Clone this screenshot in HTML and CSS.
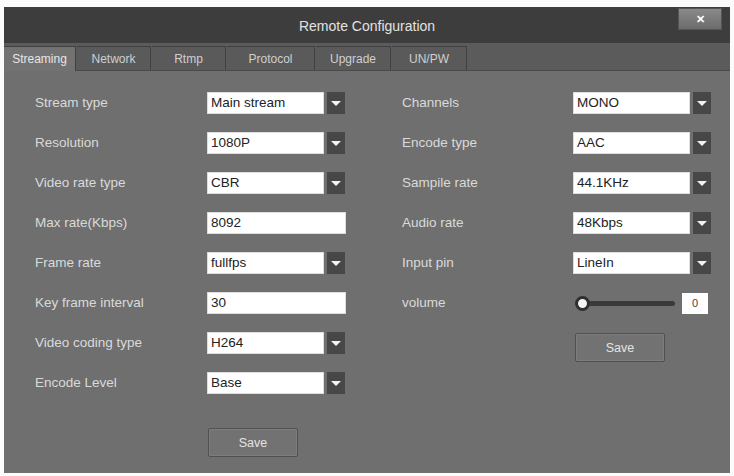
FILE: index.html
```html
<!DOCTYPE html>
<html lang="en">
<head>
  <meta charset="UTF-8" />
  <title>Remote Configuration</title>
  <link rel="stylesheet" href="styles.css">
</head>
<body>
  <div class="dialog">
    <div class="titlebar">
      <span class="title">Remote Configuration</span>
      <button class="close">&#x2715;</button>
    </div>
    <div class="tabs">
      <div class="tab active" style="width:72px">Streaming</div>
      <div class="tab" style="width:74px">Network</div>
      <div class="tab" style="width:74px">Rtmp</div>
      <div class="tab" style="width:88px">Protocol</div>
      <div class="tab" style="width:75px">Upgrade</div>
      <div class="tab" style="width:75px">UN/PW</div>
    </div>

    <div class="content">
      <div class="col col-left">
        <div class="row"><label>Stream type</label><div class="select"><span class="val">Main stream</span><span class="arrow"></span></div></div>
        <div class="row"><label>Resolution</label><div class="select"><span class="val">1080P</span><span class="arrow"></span></div></div>
        <div class="row"><label>Video rate type</label><div class="select"><span class="val">CBR</span><span class="arrow"></span></div></div>
        <div class="row"><label>Max rate(Kbps)</label><div class="text">8092</div></div>
        <div class="row"><label>Frame rate</label><div class="select"><span class="val">fullfps</span><span class="arrow"></span></div></div>
        <div class="row"><label>Key frame interval</label><div class="text">30</div></div>
        <div class="row"><label>Video coding type</label><div class="select"><span class="val">H264</span><span class="arrow"></span></div></div>
        <div class="row"><label>Encode Level</label><div class="select"><span class="val">Base</span><span class="arrow"></span></div></div>
        <button class="save save-left">Save</button>
      </div>

      <div class="col col-right">
        <div class="row"><label>Channels</label><div class="select"><span class="val">MONO</span><span class="arrow"></span></div></div>
        <div class="row"><label>Encode type</label><div class="select"><span class="val">AAC</span><span class="arrow"></span></div></div>
        <div class="row"><label>Sampile rate</label><div class="select"><span class="val">44.1KHz</span><span class="arrow"></span></div></div>
        <div class="row"><label>Audio rate</label><div class="select"><span class="val">48Kbps</span><span class="arrow"></span></div></div>
        <div class="row"><label>Input pin</label><div class="select"><span class="val">LineIn</span><span class="arrow"></span></div></div>
        <div class="row"><label>volume</label>
          <div class="slider">
            <div class="track"><span class="knob"></span></div>
            <div class="num">0</div>
          </div>
        </div>
        <button class="save save-right">Save</button>
      </div>
    </div>
  </div>
</body>
</html>
```

FILE: styles.css
```css
body {
  margin: 0;
  background: #fbfbfb;
  font-family: "Liberation Sans", Arial, sans-serif;
}
.dialog {
  margin: 7px 0 0 4px;
  width: 726px;
  height: 466px;
  display: flex;
  flex-direction: column;
  background: #6f6f6f;
}
.titlebar {
  height: 36px;
  background: #3d3d3d;
  display: flex;
  align-items: center;
  justify-content: center;
  position: relative;
}
.title {
  color: #e2e2e2;
  font-size: 14px;
  margin-top: 2px;
}
.close {
  position: absolute;
  top: 1px;
  right: 8px;
  width: 44px;
  height: 22px;
  background: linear-gradient(#8a8a8a, #6c6c6c);
  border: 1px solid #555;
  color: #fff;
  font-size: 11px;
  font-weight: bold;
  padding: 0;
}
.tabs {
  height: 27px;
  background: #5b5b5b;
  display: flex;
  align-items: flex-end;
  border-bottom: 1px solid #4a4a4a;
}
.tab {
  height: 24px;
  box-sizing: border-box;
  border: 1px solid #404040;
  border-bottom: none;
  border-left: none;
  background: #5a5a5a;
  color: #cfcfcf;
  font-size: 12px;
  display: flex;
  align-items: center;
  justify-content: center;
  margin-right: 1px;
}
.tab.active {
  background: #727272;
  color: #e6e6e6;
  height: 25px;
  margin-bottom: -1px;
}
.content {
  flex: 1;
  display: flex;
}
.col {
  display: flex;
  flex-direction: column;
  gap: 18px;
}
.col-left {
  padding: 21px 0 0 31px;
  width: 367px;
}
.col-right {
  padding: 21px 0 0 0;
}
.row {
  display: flex;
  align-items: center;
  height: 22px;
}
label {
  color: #dadada;
  font-size: 13.5px;
  width: 172px;
  margin-top: -2px;
}
.col-right label {
  width: 171px;
}
.select {
  display: flex;
  height: 22px;
}
.val {
  width: 112px;
  height: 20px;
  background: #fff;
  border: 1px solid #ddd;
  font-size: 13.5px;
  line-height: 20px;
  padding-left: 3px;
  color: #222;
}
.arrow {
  width: 18px;
  height: 22px;
  margin-left: 3px;
  background: #474747;
  display: flex;
  align-items: center;
  justify-content: center;
}
.arrow::after {
  content: "";
  border-left: 5px solid transparent;
  border-right: 5px solid transparent;
  border-top: 5px solid #f2f2f2;
}
.text {
  width: 134px;
  height: 20px;
  background: #fff;
  border: 1px solid #ddd;
  font-size: 13.5px;
  line-height: 20px;
  padding-left: 3px;
  color: #222;
}
.slider {
  display: flex;
  align-items: center;
  gap: 7px;
}
.track {
  position: relative;
  width: 94px;
  height: 5px;
  background: #3a3a3a;
  border-radius: 3px;
  margin-left: 8px;
}
.knob {
  position: absolute;
  left: -2px;
  top: -5px;
  width: 9px;
  height: 9px;
  border-radius: 50%;
  background: #f4f4f4;
  border: 3px solid #2f2f2f;
  box-sizing: content-box;
  margin-left: -4px;
}
.num {
  width: 26px;
  height: 21px;
  background: #fff;
  font-size: 11px;
  line-height: 21px;
  text-align: center;
  color: #444;
}
.save {
  width: 90px;
  height: 29px;
  background: #727272;
  border: 1px solid #505050;
  box-shadow: inset 0 0 0 1px #7d7d7d;
  color: #e4e4e4;
  font-family: "Liberation Sans", Arial, sans-serif;
  font-size: 12.5px;
  border-radius: 2px;
}
.save-left {
  margin: 16px 0 0 173px;
}
.save-right {
  margin: 1px 0 0 173px;
}
```
